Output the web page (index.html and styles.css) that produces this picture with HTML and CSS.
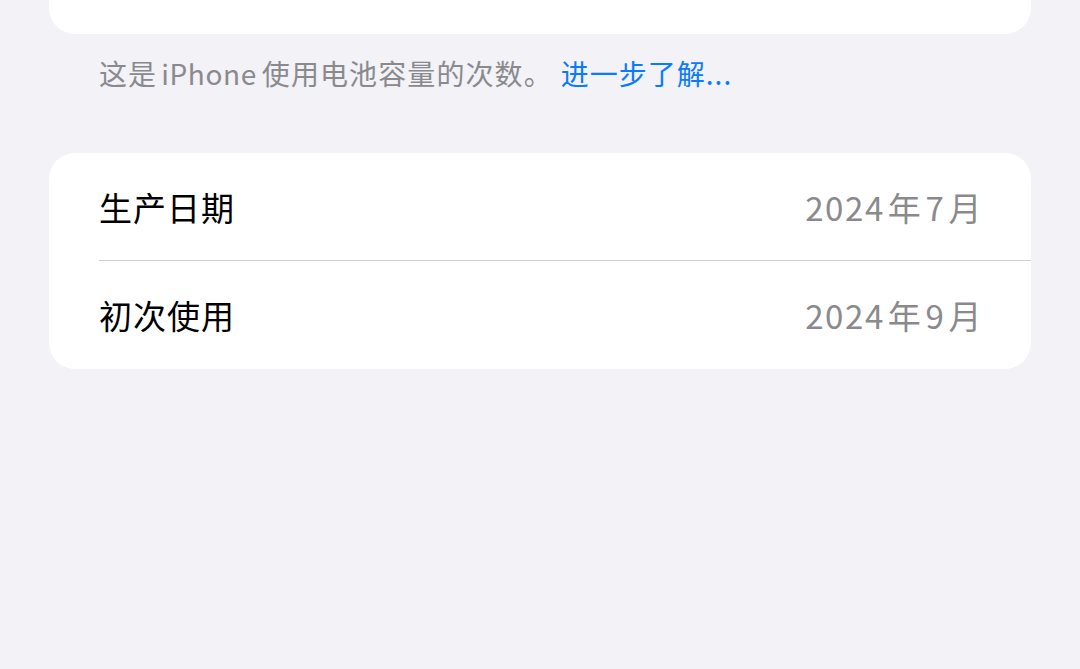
FILE: index.html
```html
<!DOCTYPE html>
<html lang="zh-CN">
<head>
<meta charset="utf-8">
<title>电池</title>
<link rel="stylesheet" href="styles.css">
</head>
<body>
<div class="page">
  <div class="card card-top"></div>
  <p class="caption"><span class="cap-text">这是<span class="latin">iPhone</span>使用电池容量的次数。</span><span class="link">进一步了解...</span></p>
  <div class="card list">
    <div class="row">
      <div class="row-inner">
        <span class="label">生产日期</span>
        <span class="value">2024<span class="cjk">年</span>7<span class="cjk">月</span></span>
      </div>
    </div>
    <div class="row">
      <div class="row-inner last">
        <span class="label">初次使用</span>
        <span class="value">2024<span class="cjk">年</span>9<span class="cjk">月</span></span>
      </div>
    </div>
  </div>
</div>
</body>
</html>
```

FILE: styles.css
```css
html, body {
  margin: 0;
  padding: 0;
  background: #f2f2f7;
}
body {
  font-family: "Noto Sans CJK SC", "Noto Sans", sans-serif;
  width: 1080px;
  height: 669px;
  overflow: hidden;
}
.page {
  padding: 0 49px;
}
.card {
  background: #ffffff;
  border-radius: 26px;
}
.card-top {
  height: 34px;
  border-radius: 0 0 26px 26px;
}
.caption {
  margin: 21px 0 0 0;
  padding-left: 50px;
  font-size: 28px;
  line-height: 36px;
  color: #8a8a8e;
  white-space: nowrap;
}
.cap-text {
  letter-spacing: 1.1px;
}
.latin {
  margin: 0 5px 0 4px;
  letter-spacing: 0.6px;
}
.link {
  color: #0a7aff;
  margin-left: 8px;
  letter-spacing: 1px;
}
.list {
  margin-top: 62px;
}
.row {
  padding-left: 50px;
}
.row-inner {
  height: 107px;
  display: flex;
  align-items: center;
  justify-content: space-between;
  padding-right: 48px;
  border-bottom: 1px solid #cfcfd2;
}
.row-inner.last {
  border-bottom: none;
  height: 108px;
}
.label {
  font-size: 33px;
  color: #000000;
  letter-spacing: 1px;
  white-space: nowrap;
}
.value {
  font-size: 33px;
  color: #8a8a8e;
  letter-spacing: 1.6px;
  white-space: nowrap;
}
.cjk {
  margin: 0 3px;
}
.cjk:last-child {
  margin-right: 0;
}
```
